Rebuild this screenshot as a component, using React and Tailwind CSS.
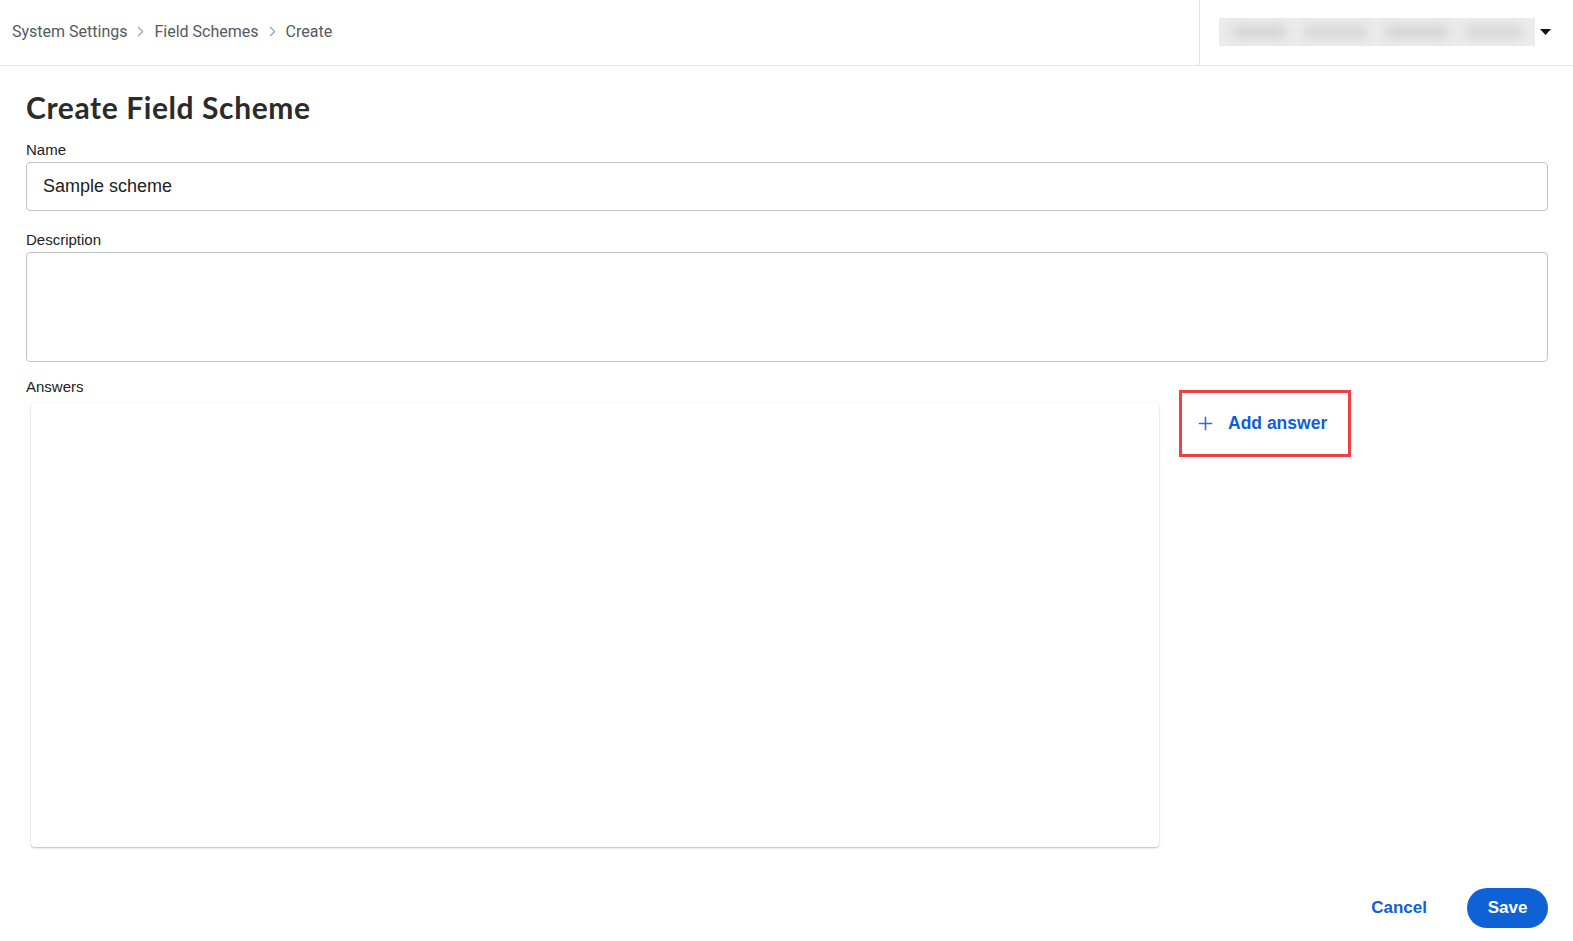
import { ChevronRight, Plus } from 'lucide-react'

const crumbs = ['System Settings', 'Field Schemes', 'Create']

const Breadcrumbs = () => (
  <nav className="flex items-center pl-3 text-[16px] text-[#555a5f] font-['Roboto',sans-serif]">
    {crumbs.map((c, i) => (
      <div key={c} className="flex items-center">
        {i > 0 && (
          <ChevronRight className="mx-[5px] h-[17px] w-[17px] text-[#9aa0a6]" strokeWidth={1.5} />
        )}
        <span>{c}</span>
      </div>
    ))}
  </nav>
)

const App = () => {
  return (
    <div className="h-[941px] flex flex-col bg-white font-['Liberation_Sans',Arial,sans-serif] text-[#333]">
      <header className="h-[66px] flex shrink-0 border-b border-[#e5e5e5]">
        <div className="flex-1 flex items-center pb-[2px]">
          <Breadcrumbs />
        </div>
        <div className="w-[374px] border-l border-[#e5e5e5] flex items-center pl-[19px] pr-[22px] gap-[5px] pb-[2px]">
          {/* account switcher, name is masked */}
          <div className="flex-1 h-[28px] bg-[#ebebeb] flex items-center gap-4 px-3 overflow-hidden">
            <div className="h-[14px] w-[56px] rounded-full bg-[#d8d8d8] blur-[4px]" />
            <div className="h-[14px] w-[66px] rounded-full bg-[#dadada] blur-[4px]" />
            <div className="h-[14px] w-[66px] rounded-full bg-[#d7d7d7] blur-[4px]" />
            <div className="h-[14px] w-[58px] rounded-full bg-[#dadada] blur-[4px]" />
          </div>
          <svg width="11" height="6" viewBox="0 0 11 6">
            <path d="M0 0h11L5.5 6z" fill="#111" />
          </svg>
        </div>
      </header>

      <main className="flex-1 flex flex-col pl-[26px] pr-[25px]">
        <h1 className="mt-[24px] text-[30px] leading-[34px] font-bold text-[#2b2b2b] font-['Lato',sans-serif] tracking-[0.6px]">
          Create Field Scheme
        </h1>

        <label className="mt-[17px] text-[15px] leading-[18px] text-[#222]">Name</label>
        <div className="mt-[3px] h-[49px] rounded-[4px] border border-[#c4c4c4] flex items-center px-[16px]">
          <span className="text-[18px] text-[#222]">Sample scheme</span>
        </div>

        <label className="mt-[20px] text-[15px] leading-[18px] text-[#222]">Description</label>
        <div className="mt-[3px] h-[110px] rounded-[4px] border border-[#c4c4c4]" />

        <label className="mt-[16px] text-[15px] leading-[18px] text-[#222]">Answers</label>
        <div className="mt-[7px] flex items-start">
          <div className="ml-[5px] w-[1128px] h-[444px] rounded-[4px] bg-white shadow-[0_1px_2px_rgba(0,0,0,0.25),0_0_2px_rgba(0,0,0,0.06)]" />
          <button className="ml-[20px] -mt-[13px] w-[172px] h-[67px] border-[3px] border-[#ef4046] flex items-center pl-[13px] gap-[12px] text-[#0f5fd8] font-bold text-[17.5px]">
            <Plus className="h-[21px] w-[21px] text-[#2f6fdc]" strokeWidth={1.8} />
            <span>Add answer</span>
          </button>
        </div>

        <div className="mt-auto mb-[13px] flex justify-end items-center gap-[40px]">
          <button className="text-[17px] font-bold text-[#0f5fd8]">Cancel</button>
          <button className="h-[40px] w-[81px] rounded-full bg-[#0f62d6] text-white text-[17px] font-bold">
            Save
          </button>
        </div>
      </main>
    </div>
  )
}

export default App
